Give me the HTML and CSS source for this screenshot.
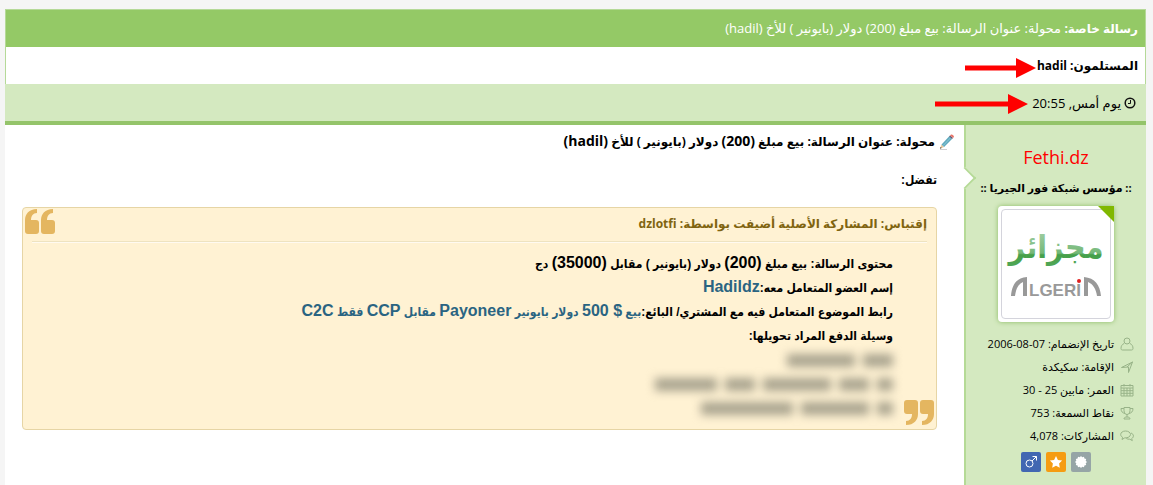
FILE: index.html
```html
<!DOCTYPE html>
<html lang="ar" dir="rtl">
<head>
  <meta charset="UTF-8">
  <meta name="viewport" content="width=device-width, initial-scale=1.0">
  <title>رسالة خاصة</title>
  <link rel="stylesheet" href="styles.css">
</head>
<body>

  <div class="pm">
    <h1 class="pm-title"><b>رسالة خاصة:</b> محولة: عنوان الرسالة: بيع مبلغ (200) دولار (بايونير ) للأخ (hadil)</h1>

    <div class="pm-row recipients">
      <b>المستلمون: hadil</b>
      <svg class="arrow" width="72" height="20" viewBox="0 0 72 20"><path d="M0 7.500h51V0l20 10-20 10v-7.500H0z"/></svg>
    </div>

    <div class="pm-row date">
      <svg class="clock" width="12" height="12" viewBox="0 0 12 12"><circle cx="6" cy="6" r="4.800"/><path d="M6.500 3v3.500H4"/></svg>
      <span>يوم أمس, 20:55</span>
      <svg class="arrow" width="94" height="20" viewBox="0 0 94 20"><path d="M0 7.500h73V0l20 10-20 10v-7.500H0z"/></svg>
    </div>

    <div class="pm-body">
      <!-- User info -->
      <aside class="user">
        <a class="username" href="#">Fethi.dz</a>
        <p class="rank">:: مؤسس شبكة فور الجيريا ::</p>
        <div class="avatar">
          <svg width="108" height="108" viewBox="0 0 108 108">
            <defs>
              <linearGradient id="green" gradientUnits="userSpaceOnUse" x1="0" y1="20" x2="0" y2="60">
                <stop offset="0" stop-color="#a3cfa5"/>
                <stop offset=".58" stop-color="#74b878"/>
                <stop offset=".62" stop-color="#45a04a"/>
                <stop offset="1" stop-color="#55a85a"/>
              </linearGradient>
            </defs>
            <text class="logo-ar" x="54" y="48" text-anchor="middle" fill="url(#green)">مجزائر</text>
            <path class="swoosh" d="M9 86c1-11 5-18 16-19v19h-4V72c-5 2-7 7-8 14zM99 86c-1-11-6-18-17-19v19h4V72c5 2 8 7 9 14z"/>
            <text class="logo-en" x="53" y="86" text-anchor="middle" direction="ltr">LGERI</text>
            <circle cx="77" cy="71" r="2" fill="#e02020"/>
          </svg>
        </div>

        <ul class="stats">
          <li>
            <svg width="14" height="14" viewBox="0 0 14 14"><circle cx="7" cy="4" r="3"/><path d="M4 6.500C2 7.500 1 9 1 11.500c0 1 .6 1.500 1.500 1.500h9c.9 0 1.500-.5 1.500-1.500 0-2.500-1-4-3-5"/></svg>
            تاريخ الإنضمام: 07-08-2006
          </li>
          <li>
            <svg width="14" height="14" viewBox="0 0 14 14"><path d="M1.500 7.500 12.500 2 8.500 12.500V7zM12.500 2 7 7"/></svg>
            الإقامة: سكيكدة
          </li>
          <li>
            <svg width="14" height="14" viewBox="0 0 14 14"><path d="M1 2.500h12v10.500H1zM1 5h12M1 7.700h12M1 10.300h12M4 5v8M7 5v8M10 5v8M4 1v2.500M10 1v2.500"/></svg>
            العمر: مابين 25 - 30
          </li>
          <li>
            <svg width="14" height="14" viewBox="0 0 14 14"><path d="M4 1.500h6v3c0 2.500-1.500 4-3 4s-3-1.500-3-4zM4 2.500H1c0 3 1.500 4.500 4 5M10 2.500h3c0 3-1.500 4.500-4 5M7 8.500V11M4 13c0-1.500 1-2 3-2s3 .5 3 2z"/></svg>
            نقاط السمعة: 753
          </li>
          <li>
            <svg width="14" height="14" viewBox="0 0 14 14"><path d="M5.500 2C2.800 2 .7 3.500.7 5.500c0 1.200.7 2.200 1.900 2.800L2 10.500l2.700-1.600c3.200.2 5.800-1.400 5.800-3.400S8.300 2 5.500 2zM11 4c1.500.6 2.400 1.600 2.400 2.900 0 1.100-.6 2-1.700 2.700l.6 2-2.500-1.400c-1.300.1-2.500-.1-3.500-.7"/></svg>
            المشاركات: 4,078
          </li>
        </ul>

        <div class="badges">
          <a class="badge offline" href="#" aria-label="غير متصل">
            <svg width="14" height="14" viewBox="0 0 14 14"><path d="m7 1 1.200 1.300L10 1.800l.4 1.800 1.800.4-.5 1.800L13 7l-1.300 1.200.5 1.800-1.800.4-.4 1.800-1.800-.5L7 13l-1.200-1.300-1.800.5-.4-1.800-1.800-.4.500-1.800L1 7l1.300-1.200L1.800 4l1.800-.4.4-1.800 1.800.5z"/></svg>
          </a>
          <a class="badge star" href="#" aria-label="مميز">
            <svg width="14" height="14" viewBox="0 0 14 14"><path d="m7 1 1.900 3.900 4.200.6-3 3 .7 4.300L7 10.800l-3.800 2 .7-4.300-3-3 4.200-.6z"/></svg>
          </a>
          <a class="badge male" href="#" aria-label="ذكر">
            <svg width="14" height="14" viewBox="0 0 14 14"><circle cx="5.500" cy="8.500" r="3.500"/><path d="m8 6 4.500-4.500M8.500 1.500h4v4"/></svg>
          </a>
        </div>
      </aside>

      <!-- Message -->
      <main class="message">
        <h2 class="subject">
          <svg width="16" height="16" viewBox="0 0 16 16">
            <path d="M1 15.500h7" stroke="#d0d0d0"/>
            <path d="m1 14.800 1.500-4.300 2.600 2.400z" fill="#e9c79a"/>
            <path d="m1 14.800.6-1.800 1.100 1z" fill="#333"/>
            <path d="m2.500 10.500 7.500-8 3 2.600-7.900 7.800z" fill="#5fa9bd"/>
            <path d="m4 11.700 7.700-8" stroke="#8fcbd8"/>
            <path d="m10 2.500 1-1.100 3 2.600-1 1.100z" fill="#555c78"/>
            <path d="m11 1.400 1-.9c1.200-.6 3.300 1.200 2.900 2.500l-.9 1z" fill="#e8756a"/>
          </svg>
          <span>محولة: عنوان الرسالة: بيع مبلغ <bdi class="lat">(200)</bdi> دولار (بايونير ) للأخ <bdi class="lat">(hadil)</bdi></span>
        </h2>

        <div class="content">
          <p class="intro">تفضل:</p>

          <blockquote class="quote">
            <svg class="mark open" width="30" height="26" viewBox="0 0 30 26"><path d="M12 0v4c-4 0-6 3-6 7h5q3 0 3 3v8q0 3-3 3H3q-3 0-3-3V11C0 5 4 0 12 0zM28 0v4c-4 0-6 3-6 7h5q3 0 3 3v8q0 3-3 3h-8q-3 0-3-3V11C16 5 20 0 28 0z"/></svg>
            <div class="quote-head">إقتباس: المشاركة الأصلية أضيفت بواسطة: <span>dzlotfi</span></div>
            <div class="quote-text">
              <p>محتوى الرسالة: بيع مبلغ <bdi class="lat">(200)</bdi> دولار (بايونير ) مقابل <bdi class="lat">(35000)</bdi> دج</p>
              <p>إسم العضو المتعامل معه:<a class="lat" href="#">Hadildz</a></p>
              <p>رابط الموضوع المتعامل فيه مع المشتري/ البائع:<a href="#">بيع <span class="lat">$ 500</span> دولار بايونير <span class="lat">Payoneer</span> مقابل <span class="lat">CCP</span> فقط <span class="lat">C2C</span></a></p>
              <p>وسيلة الدفع المراد تحويلها:</p>
              <!-- Hidden payment details -->
              <div class="hidden-text" aria-hidden="true">
                <div><i class="w30"></i><i class="w70"></i></div>
                <div><i class="w20"></i><i class="w30"></i><i class="w70"></i><i class="w30"></i><i class="w60"></i></div>
                <div><i class="w20"></i><i class="w70"></i><i class="w90"></i></div>
              </div>
            </div>
            <svg class="mark close" width="30" height="26" viewBox="0 0 30 26"><path d="M2 25v-4c4 0 6-3 6-7H3q-3 0-3-3V3q0-3 3-3h8q3 0 3 3v11c0 6-4 11-12 11zM18 25v-4c4 0 6-3 6-7h-5q-3 0-3-3V3q0-3 3-3h8q3 0 3 3v11c0 6-4 11-12 11z"/></svg>
          </blockquote>
        </div>
      </main>
    </div>
  </div>

</body>
</html>
```
FILE: styles.css
```css
* {
  box-sizing: border-box;
}

body {
  margin: 0;
  padding: 9px 7px 0 5px;
  background-color: #f5f5f5;
  color: #000;
  font-family: 'Open Sans', 'DejaVu Sans', sans-serif;
  font-size: 12px;
  line-height: 20px;
}

a {
  color: #2a6482;
  text-decoration: none;
}

p,
h1,
h2,
ul,
blockquote {
  margin: 0;
  padding: 0;
}

svg {
  flex: none;
}

.pm {
  display: flex;
  flex-direction: column;
  min-height: calc(100vh - 9px);
}

.pm-title {
  padding: 8px 7px;
  background-color: #94c966;
  border: 1px solid #b5d998;
  border-bottom: 0;
  color: #fff;
  font-size: 13px;
  font-weight: normal;
  line-height: 20px;
}

.pm-title b {
  font-size: 12px;
}

.pm-row {
  display: flex;
  align-items: center;
  height: 37px;
  padding: 0 7px;
}

.recipients {
  background-color: #fff;
  border: 1px solid #b5d998;
  border-width: 0 1px;
}

.recipients .arrow {
  margin-top: 4px;
}

.date {
  height: 41px;
  gap: 3px;
  padding: 0 10px;
  background-color: #d4e9c0;
  border-bottom: 4px solid #94c46a;
  font-size: 13px;
}

.date .arrow {
  margin-top: 2px;
}

.arrow {
  fill: #f00;
}

.clock {
  fill: none;
  stroke: #111;
  stroke-width: 1.5;
}

.clock path {
  stroke-width: 1;
}

.pm-body {
  display: flex;
  flex: 1;
  background-color: #fff;
}

/* User info */
.user {
  position: relative;
  display: flex;
  flex: none;
  flex-direction: column;
  align-items: center;
  width: 182px;
  padding: 20px 12px 0;
  background-color: #d4e9c0;
  border-left: 2px solid #b5da96;
}

/* Notch pointing from the message to the user */
.user::before {
  content: "";
  position: absolute;
  top: 45px;
  left: -9px;
  width: 14px;
  height: 14px;
  background-color: #fff;
  border: 2px solid #b5da96;
  border-width: 2px 2px 0 0;
  transform: rotate(45deg);
}

.username {
  color: #f00;
  font-size: 18px;
  line-height: 24px;
}

.rank {
  margin-top: 9px;
  font-size: 11px;
  font-weight: bold;
  white-space: nowrap;
}

.avatar {
  position: relative;
  padding: 3px;
  margin-top: 8px;
  background-color: #fff;
  border-radius: 4px;
  box-shadow: 0 0 5px #8aba62;
}

.avatar::after {
  content: "";
  position: absolute;
  top: 0;
  right: 0;
  border: 8px solid transparent;
  border-top-color: #80b800;
  border-right-color: #80b800;
}

.avatar svg {
  display: block;
  width: 110px;
  height: 110px;
  border: 1px solid #d4d4dc;
  border-radius: 4px;
}

.logo-ar {
  font-family: 'DejaVu Sans Condensed', 'DejaVu Sans', sans-serif;
  font-size: 32px;
  font-weight: bold;
}

.logo-en {
  fill: #999;
  font-family: 'Liberation Sans', Arial, sans-serif;
  font-size: 17px;
  font-weight: bold;
}

.swoosh {
  fill: #999;
}

.stats {
  align-self: stretch;
  margin-top: 10px;
  list-style: none;
  font-size: 11px;
  white-space: nowrap;
}

.stats li {
  display: flex;
  align-items: center;
  gap: 6px;
  height: 23px;
}

.stats svg {
  fill: none;
  stroke: #98b388;
}

.badges {
  display: flex;
  justify-content: center;
  gap: 5px;
  margin-top: 5px;
}

.badge {
  display: flex;
  align-items: center;
  justify-content: center;
  width: 20px;
  height: 20px;
  border-radius: 2px;
  fill: #fff;
}

.offline {
  background-color: #96a5a6;
}

.star {
  background-color: #f59c12;
}

.male {
  background-color: #4267b2;
  fill: none;
  stroke: #fff;
}

/* Message */
.message {
  flex: 1;
  min-width: 0;
  padding: 7px 9px 20px 17px;
}

.subject {
  display: flex;
  align-items: center;
  gap: 4px;
  font-size: 12px;
  line-height: 20px;
}

.subject .lat {
  font-size: 14px;
  line-height: 16px;
}

.content {
  padding-right: 18px;
  font-family: 'Liberation Sans', Arial, 'DejaVu Sans Condensed', 'DejaVu Sans', sans-serif;
  font-size: 12px;
  font-weight: bold;
  line-height: 24px;
}

/* Latin letters and digits run larger than the Arabic */
.content .lat {
  font-size: 16px;
  line-height: 20px;
}

.intro {
  margin-top: 16px;
}

.quote {
  position: relative;
  min-height: 223px;
  margin-top: 15px;
  padding: 6px 9px;
  background-color: #fff2d3;
  border: 1px solid #e6d5a5;
  border-radius: 4px;
}

.quote-head {
  padding-bottom: 7px;
  border-bottom: 1px solid #eee3c0;
  box-shadow: 0 1px #fffaf0;
  color: #806410;
  font-family: 'Open Sans', 'DejaVu Sans', sans-serif;
  font-size: 12px;
  line-height: 20px;
}

.quote-text {
  padding: 10px 34px 0;
}

.mark {
  position: absolute;
  fill: #e4b660;
}

.mark.open {
  top: 1px;
  left: 2px;
}

.mark.close {
  right: 2px;
  bottom: 3px;
}

.hidden-text {
  filter: blur(5px);
}

.hidden-text div {
  display: flex;
  align-items: center;
  gap: 8px;
  height: 24px;
}

.hidden-text i {
  height: 13px;
  background-color: #aaa48f;
}

.w20 {
  width: 16px;
}

.w30 {
  width: 30px;
}

.w60 {
  width: 62px;
}

.w70 {
  width: 68px;
}

.w90 {
  width: 92px;
}
```
